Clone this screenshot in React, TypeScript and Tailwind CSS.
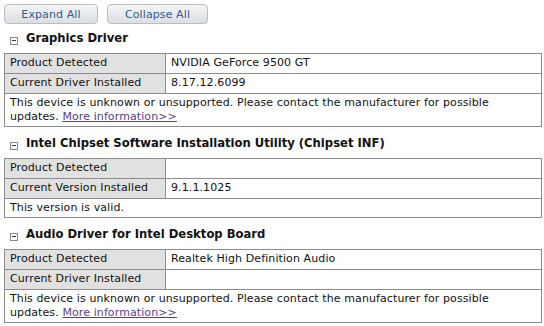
import React from 'react';

type Row = { label: string; value: string };
type Section = { title: string; rows: Row[]; note: string; link?: boolean };

const sections: Section[] = [
  {
    title: 'Graphics Driver',
    rows: [
      { label: 'Product Detected', value: 'NVIDIA GeForce 9500 GT' },
      { label: 'Current Driver Installed', value: '8.17.12.6099' },
    ],
    note: 'This device is unknown or unsupported. Please contact the manufacturer for possible updates.',
    link: true,
  },
  {
    title: 'Intel Chipset Software Installation Utility (Chipset INF)',
    rows: [
      { label: 'Product Detected', value: '' },
      { label: 'Current Version Installed', value: '9.1.1.1025' },
    ],
    note: 'This version is valid.',
  },
  {
    title: 'Audio Driver for Intel Desktop Board',
    rows: [
      { label: 'Product Detected', value: 'Realtek High Definition Audio' },
      { label: 'Current Driver Installed', value: '' },
    ],
    note: 'This device is unknown or unsupported. Please contact the manufacturer for possible updates.',
    link: true,
  },
];

const MinusBox = () => (
  <span className="inline-flex w-[8px] h-[8px] border border-[#8a8a8a] bg-white items-center justify-center mr-[8px] mt-[3px]">
    <span className="w-[4px] h-px bg-[#333]" />
  </span>
);

const Button = ({ children, w }: { children: React.ReactNode; w: string }) => (
  <button
    className={`${w} h-[20px] rounded-[4px] border border-[#bdbdbd] bg-gradient-to-b from-[#f4f5f6] to-[#dcdfe2] text-[#2f5f8f] text-[11px] leading-none`}
  >
    {children}
  </button>
);

export default function App() {
  return (
    <div
      className="w-[544px] h-[326px] bg-white px-[4px] pt-[4px] text-[11px] tracking-[0.1px] text-[#111] overflow-hidden"
      style={{ fontFamily: '"DejaVu Sans", Verdana, sans-serif' }}
    >
      <div className="flex gap-[9px]">
        <Button w="w-[94px]">Expand All</Button>
        <Button w="w-[101px]">Collapse All</Button>
      </div>

      {sections.map((s, i) => (
        <div key={s.title} className={i === 0 ? '' : 'mt-[2px]'}>
          <div className="flex items-center h-[29px] pl-[6px] pt-[1px]">
            <MinusBox />
            <span className="font-bold text-[11.6px] tracking-normal">{s.title}</span>
          </div>
          <div className="w-[538px] border border-[#8c8c8c]">
            {s.rows.map((r) => (
              <div key={r.label} className="flex h-[20px] border-b border-[#8c8c8c]">
                <div className="w-[161px] bg-[#e1e1e1] border-r border-[#8c8c8c] pl-[5px] flex items-center">{r.label}</div>
                <div className="flex-1 pl-[5px] flex items-center">{r.value}</div>
              </div>
            ))}
            <div className="pl-[5px] pr-[36px] py-[2px] leading-[14px]">
              {s.note}
              {s.link && (
                <>
                  {' '}
                  <a href="#" className="text-[#5b3d8e] underline">More information&gt;&gt;</a>
                </>
              )}
            </div>
          </div>
        </div>
      ))}
    </div>
  );
}
